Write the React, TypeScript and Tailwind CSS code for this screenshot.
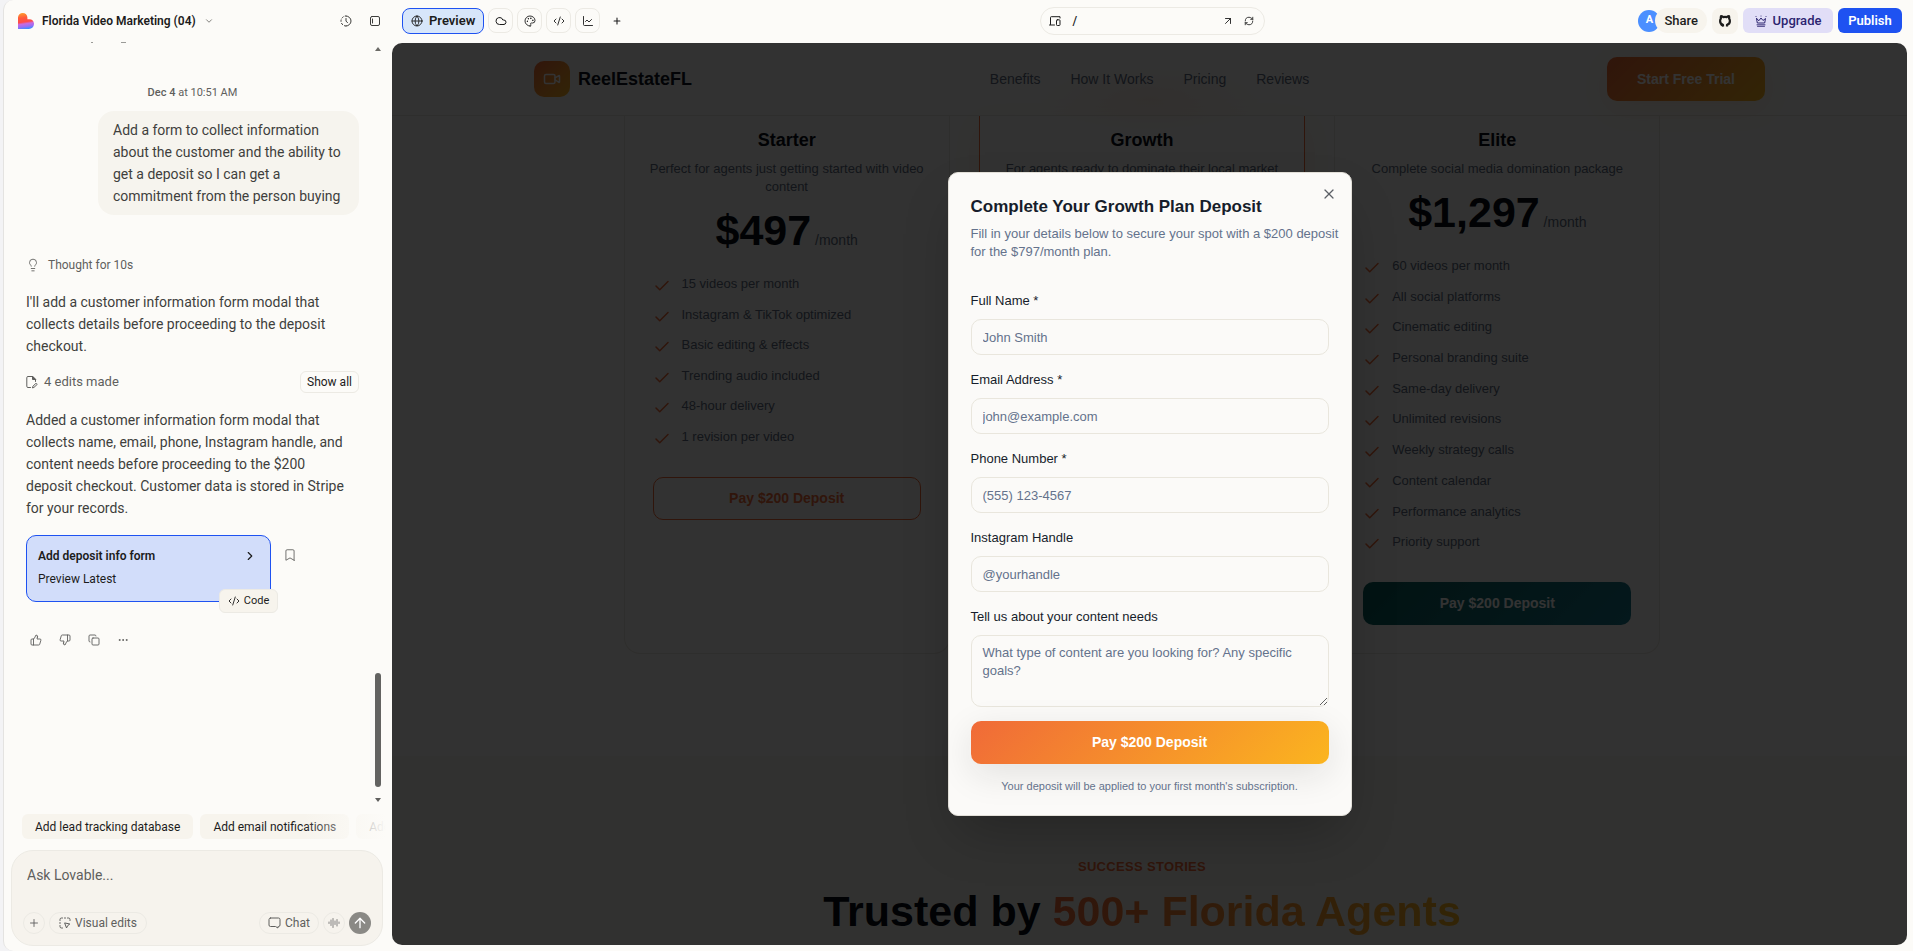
import type { ReactNode } from "react";
import {
  ArrowUp,
  ArrowUpRight,
  AudioLines,
  Bookmark,
  ChartLine,
  Check,
  ChevronDown,
  ChevronRight,
  Cloud,
  CodeXml,
  Copy,
  Ellipsis,
  Globe,
  Lightbulb,
  Palette,
  Plus,
  RefreshCw,
  ThumbsDown,
  ThumbsUp,
  Video,
  X,
} from "lucide-react";

const stroke = { fill: "none", stroke: "currentColor", strokeLinecap: "round", strokeLinejoin: "round" } as const;

function BrandMark() {
  return (
    <svg viewBox="0 0 16 16" className="size-4 shrink-0" aria-hidden="true">
      <defs>
        <linearGradient id="brand" x1="0.3" y1="0" x2="0.45" y2="1">
          <stop offset="0" stopColor="#ff9a2e" />
          <stop offset="0.3" stopColor="#ff5a3c" />
          <stop offset="0.56" stopColor="#ff4a4a" />
          <stop offset="0.68" stopColor="#c86be0" />
          <stop offset="0.85" stopColor="#9a6cf5" />
          <stop offset="1" stopColor="#3f8cff" />
        </linearGradient>
      </defs>
      <path
        d="M0 4.6A4.7 4.7 0 0 1 4.7 0C7.400 0 9.400 2 9.400 4.600V6.200H11.500A4.500 4.500 0 0 1 16 10.800C16 13.800 13.800 16 11 16H0Z"
        fill="url(#brand)"
      />
    </svg>
  );
}

function GithubIcon() {
  return (
    <svg viewBox="0 0 14 14" className="size-3.5" {...stroke} strokeWidth="2.200" strokeLinecap="butt" aria-hidden="true">
      <path d="M5 12.600V10.800C3.400 10.300 2.100 9.100 2.100 6.900C2.100 5.900 2.400 5.100 2.900 4.500C2.700 3.700 2.700 2.900 3 2.200C3.800 2.200 4.600 2.600 5.300 3.100C6.400 2.800 7.600 2.800 8.700 3.100C9.400 2.600 10.200 2.200 11 2.200C11.300 2.900 11.300 3.700 11.100 4.500C11.600 5.100 11.900 5.900 11.900 6.900C11.900 9.100 10.600 10.300 9 10.800V12.600" />
      <path d="M5 11.800C3.700 12 3.200 11.400 2.500 10.500" strokeWidth="1.200" />
    </svg>
  );
}

function HistoryIcon() {
  return (
    <svg viewBox="0 0 12 12" className="size-3" {...stroke} strokeWidth="1" aria-hidden="true">
      <path d="M6 1A5 5 0 0 1 6 11" />
      <path d="M6 11A5 5 0 0 1 6 1" strokeDasharray="1.6 2" />
      <path d="M6 3.500V6.200L7.500 7.500" />
    </svg>
  );
}

function PanelIcon() {
  return (
    <svg viewBox="0 0 12 12" className="size-3" {...stroke} strokeWidth="1" aria-hidden="true">
      <rect x="1.500" y="1.500" width="9" height="9" rx="1.500" />
      <path d="M3.500 4V8" />
    </svg>
  );
}

function FileEditIcon() {
  return (
    <svg viewBox="0 0 12 14" className="h-3.5 w-3" {...stroke} strokeWidth="1" aria-hidden="true">
      <path d="M4.500 12.500H2A1.200 1.200 0 0 1 .8 11.300V2.700A1.200 1.200 0 0 1 2 1.500H6.500L9.500 4.500V6.500" />
      <path d="M6.500 1.500V4.500H9.500Z" fill="currentColor" />
      <path d="M6.500 12.500L7 11.200L10 8.200L11.200 9.400L8.200 12.200Z" />
    </svg>
  );
}

function VisualEditIcon() {
  return (
    <svg viewBox="0 0 12 12" className="size-3" {...stroke} strokeWidth="1" aria-hidden="true">
      <path d="M1 3.500V2.500A1.500 1.500 0 0 1 2.500 1H3.500M8.500 1H9.500A1.500 1.500 0 0 1 11 2.500V3.500M1 8.500V9.500A1.500 1.500 0 0 0 2.500 11H3.500M5.500 1H6.500M1 5.500V6.500" />
      <path d="M6 6L10.800 7L8.800 8.500L7.700 10.600Z" />
    </svg>
  );
}

function ChatIcon() {
  return (
    <svg viewBox="0 0 13 12" className="h-3 w-[13px]" {...stroke} strokeWidth="1" aria-hidden="true">
      <path d="M2.500 1H10.500A1.500 1.500 0 0 1 12 2.500V8A1.500 1.500 0 0 1 10.500 9.500H10V11L7.500 9.500H2.500A1.500 1.500 0 0 1 1 8V2.500A1.500 1.500 0 0 1 2.500 1Z" />
    </svg>
  );
}

function DevicesIcon() {
  return (
    <svg viewBox="0 0 12 10" className="h-2.5 w-3" {...stroke} strokeWidth="1" aria-hidden="true">
      <path d="M1.500 8.500V1.500A.8 .8 0 0 1 2.300 .7H11V2M.5 9H5.500" />
      <rect x="7.500" y="3.800" width="3.500" height="5.700" rx=".8" />
    </svg>
  );
}

function CrownIcon() {
  return (
    <svg viewBox="0 0 12 12" className="size-3" {...stroke} strokeWidth="1" aria-hidden="true">
      <path d="M1.500 3.500L2.300 8H9.700L10.500 3.500L8 5.500L6 3L4 5.500Z" />
      <path d="M1 1.500V1.600M6 1V1.100M11 1.500V1.600M2 9.800H10M2.500 11.300H9.500" strokeWidth=".9" />
    </svg>
  );
}

function ToolButton({ label, children }: { label: string; children: ReactNode }) {
  return (
    <button aria-label={label} className="flex size-[25px] items-center justify-center rounded-lg border border-[#eceae4]">
      {children}
    </button>
  );
}

function Sidebar() {
  return (
    <aside className="flex w-[388px] shrink-0 flex-col">
      <header className="flex h-[41px] items-center pl-[14px] pr-[11px]">
        <BrandMark />
        <button className="ml-2 flex items-center gap-2 text-[12px] font-semibold text-[#1c1c1c]">
          Florida Video Marketing (04)
          <ChevronDown className="size-2.5 text-[#6b6a66]" />
        </button>
        <div className="ml-auto flex items-center gap-[17px] text-[#3d3d3b]">
          <button aria-label="History"><HistoryIcon /></button>
          <button aria-label="Collapse panel"><PanelIcon /></button>
        </div>
      </header>

      <div className="flex min-h-0 flex-1">
        <div className="flex min-w-0 flex-1 flex-col overflow-hidden pl-[22px] pr-[15px] text-[14px] leading-[22px] text-[#3f3f3d]">
          <div className="ml-[65px] flex h-0.5 items-end gap-7" aria-hidden="true">
            <span className="h-px w-0.5 bg-[#9a9a97]" />
            <span className="h-px w-[5px] bg-[#9a9a97]" />
          </div>
          <p className="mt-[42px] text-center text-[11px] leading-4 text-[#5f5f5d]">
            <span className="font-medium">Dec 4</span> at 10:51 AM
          </p>
          <p className="mt-[10px] w-[261px] self-end rounded-2xl bg-[#f6f4ee] px-[15px] py-2">
            Add a form to collect information about the customer and the ability to get a deposit so I can get a
            commitment from the person buying
          </p>
          <div className="mt-[39px] flex items-center gap-2 text-[12px] text-[#5f5f5d]">
            <Lightbulb className="size-3.5" strokeWidth={1.5} />
            Thought for 10s
          </div>
          <p className="mt-[15px]">
            I'll add a customer information form modal that collects details before proceeding to the deposit checkout.
          </p>
          <div className="mt-[14px] flex items-center gap-1.5 text-[13px] text-[#5f5f5d]">
            <FileEditIcon />
            4 edits made
            <button className="ml-auto h-[22px] w-[59px] rounded-md border border-[#eceae4] text-[12px] leading-none text-[#1c1c1c]">
              Show all
            </button>
          </div>
          <p className="mt-4 pr-3">
            Added a customer information form modal that collects name, email, phone, Instagram handle, and content
            needs before proceeding to the $200 deposit checkout. Customer data is stored in Stripe for your records.
          </p>
          <div className="mt-4 flex items-start gap-3">
            <div className="relative h-[67px] w-[245px] rounded-[10px] border border-[#1e52f1] bg-[#d2ddfa] px-[11px] pt-[9px] text-[12px] text-[#1c1c1c]">
              <div className="flex items-center justify-between font-semibold">
                Add deposit info form
                <ChevronRight className="mr-0.5 size-3.5" />
              </div>
              <div className="mt-px">Preview Latest</div>
              <button className="absolute -bottom-3 -right-2 flex h-6 w-[59px] items-center justify-center gap-1 rounded-md border border-[#eceae4] bg-[#f7f4ed] text-[11px]">
                <CodeXml className="size-3" strokeWidth={1.8} />
                Code
              </button>
            </div>
            <button aria-label="Bookmark" className="mt-[13px] text-[#5f5f5d]">
              <Bookmark className="size-3.5" strokeWidth={1.5} />
            </button>
          </div>
          <div className="ml-[4px] mt-8 flex items-center gap-[17px] text-[#5f5f5d]">
            <button aria-label="Like"><ThumbsUp className="size-3" strokeWidth={1.8} /></button>
            <button aria-label="Dislike"><ThumbsDown className="size-3" strokeWidth={1.8} /></button>
            <button aria-label="Copy"><Copy className="size-3" strokeWidth={1.8} /></button>
            <button aria-label="More"><Ellipsis className="size-3" strokeWidth={2} /></button>
          </div>
        </div>
        <div className="mr-[10px] flex w-2 flex-col items-center justify-between pb-3 pt-1.5" aria-hidden="true">
          <span className="size-0 border-x-[3px] border-b-4 border-x-transparent border-b-[#6b6a66]" />
          <div className="mt-auto h-[114px] w-1.5 rounded-full bg-[#636361]" />
          <span className="mt-[11px] size-0 border-x-[3px] border-t-4 border-x-transparent border-t-[#5f5f5d]" />
        </div>
      </div>

      <div className="relative mr-[6px] flex h-[25px] gap-[7px] overflow-hidden pl-[18px] text-[12px] text-[#1c1c1c]">
        <button className="shrink-0 rounded-md bg-[#f7f4ed] px-[13px]">Add lead tracking database</button>
        <button className="shrink-0 rounded-md bg-[#f7f4ed] px-[13px]">Add email notifications</button>
        <button className="shrink-0 rounded-md bg-[#f7f4ed] px-[13px]">Add admin dashboard</button>
        <div className="absolute inset-y-0 right-0 w-[84px] bg-gradient-to-r from-transparent to-[#fcfbf8]" />
      </div>

      <form className="mb-[5px] ml-[7px] mr-[9px] mt-[11px] flex h-[96px] flex-col rounded-[22px] border border-[#eceae4] bg-[#f6f3ed] px-[11px] pb-[11px] text-[#5f5f5d]">
        <input
          aria-label="Ask Lovable"
          placeholder="Ask Lovable..."
          className="mt-3 h-6 w-full bg-transparent px-1 text-[14px] placeholder:text-[#5f5f5d] focus:outline-none"
        />
        <div className="mt-auto flex items-center gap-1 text-[12px]">
          <button type="button" aria-label="Attach" className="flex size-[22px] items-center justify-center rounded-full border border-[#eceae4]">
            <Plus className="size-3" strokeWidth={1.8} />
          </button>
          <button type="button" className="flex h-[22px] w-[98px] items-center justify-center gap-1 rounded-full border border-[#eceae4]">
            <VisualEditIcon />
            Visual edits
          </button>
          <button type="button" className="ml-auto flex h-[22px] w-[60px] items-center justify-center gap-1 rounded-full border border-[#eceae4]">
            <ChatIcon />
            Chat
          </button>
          <button type="button" aria-label="Voice" className="flex size-[22px] items-center justify-center rounded-full border border-[#eceae4]">
            <AudioLines className="size-3" strokeWidth={1.5} />
          </button>
          <button type="submit" aria-label="Send" className="flex size-[22px] items-center justify-center rounded-full bg-[#8a8985] text-white">
            <ArrowUp className="size-4" strokeWidth={2} />
          </button>
        </div>
      </form>
    </aside>
  );
}

function Toolbar() {
  return (
    <header className="grid h-[41px] grid-cols-[1fr_auto_1fr] items-center pl-[10px] pr-[5px] text-[#1c1c1c]">
      <div className="flex items-center gap-1">
        <button className="flex h-[26px] items-center gap-1.5 rounded-lg border border-[#1e52f1] bg-[#d7e6fa] px-2 text-[13px] font-semibold">
          <Globe className="size-3" strokeWidth={1.8} />
          Preview
        </button>
        <ToolButton label="Cloud"><Cloud className="size-3" strokeWidth={2} /></ToolButton>
        <ToolButton label="Design"><Palette className="size-3" strokeWidth={1.8} /></ToolButton>
        <ToolButton label="Code"><CodeXml className="size-3" strokeWidth={1.8} /></ToolButton>
        <ToolButton label="Analytics"><ChartLine className="size-3" strokeWidth={1.8} /></ToolButton>
        <button aria-label="Add tab" className="flex size-[25px] items-center justify-center">
          <Plus className="size-2.5" strokeWidth={2.6} />
        </button>
      </div>
      <div className="flex h-7 w-[225px] items-center rounded-full border border-[#eceae4] px-2 text-[12px]">
        <DevicesIcon />
        <span className="ml-3 font-medium">/</span>
        <button aria-label="Open in new tab" className="ml-auto"><ArrowUpRight className="size-3" strokeWidth={1.8} /></button>
        <button aria-label="Reload" className="ml-2.5 mr-[2px]"><RefreshCw className="size-2.5" strokeWidth={2} /></button>
      </div>
      <div className="flex items-center justify-end gap-[5px] text-[13px] font-medium">
        <div className="flex items-center">
          <span className="-mr-[5px] flex size-[22px] items-center justify-center rounded-full bg-[#4b8fff] text-[11px] font-bold text-white">A</span>
          <button className="relative h-[25px] rounded-full bg-[#f7f4ed] px-[9px]">Share</button>
        </div>
        <button aria-label="GitHub" className="flex size-[26px] items-center justify-center rounded-lg bg-[#f7f4ed]">
          <GithubIcon />
        </button>
        <button className="flex h-[25px] w-[90px] items-center justify-center gap-1.5 rounded-md bg-[#e1def7] text-[#2c2470]">
          <CrownIcon />
          Upgrade
        </button>
        <button className="h-[25px] w-[64px] rounded-md bg-[#1e52f1] font-semibold text-white">Publish</button>
      </div>
    </header>
  );
}

type Plan = { name: string; blurb: string; price: string; features: string[]; list: string };

const starter: Plan = {
  name: "Starter",
  blurb: "Perfect for agents just getting started with video content",
  price: "$497",
  list: "h-[175px]",
  features: [
    "15 videos per month",
    "Instagram & TikTok optimized",
    "Basic editing & effects",
    "Trending audio included",
    "48-hour delivery",
    "1 revision per video",
  ],
};

const growth: Plan = {
  name: "Growth",
  blurb: "For agents ready to dominate their local market",
  price: "$797",
  list: "h-[235px]",
  features: [],
};

const elite: Plan = {
  name: "Elite",
  blurb: "Complete social media domination package",
  price: "$1,297",
  list: "h-[300px]",
  features: [
    "60 videos per month",
    "All social platforms",
    "Cinematic editing",
    "Personal branding suite",
    "Same-day delivery",
    "Unlimited revisions",
    "Weekly strategy calls",
    "Content calendar",
    "Performance analytics",
    "Priority support",
  ],
};

function PlanCard({ plan, frame, cta }: { plan: Plan; frame: string; cta: string }) {
  return (
    <section className={`flex flex-1 flex-col rounded-b-2xl border border-t-0 px-7 pb-7 pt-3 ${frame}`}>
      <h3 className="text-center text-[18px] font-bold leading-6 text-[#050a14]">{plan.name}</h3>
      <p className="-mx-1 mt-[8px] text-center text-[13px] leading-[18px] text-[#5e6a80]">{plan.blurb}</p>
      <p className="mt-3 text-center leading-[44px]">
        <span className="text-[43px] font-bold text-[#050a14]">{plan.price}</span>
        <span className="text-[14px] text-[#5e6a80]"> /month</span>
      </p>
      <ul className={`mt-[11px] flex flex-col justify-between ${plan.list}`}>
        {plan.features.map((f) => (
          <li key={f} className="flex items-start gap-[11px] text-[13px] leading-[22px] text-[#5e6a80]">
            <Check className="mt-1 size-[18px] text-[#f06a38]" strokeWidth={2} />
            {f}
          </li>
        ))}
      </ul>
      <button className={`mt-[29px] h-[43px] rounded-[10px] text-[14px] font-bold ${cta}`}>Pay $200 Deposit</button>
    </section>
  );
}

function Site() {
  return (
    <div className="flex flex-1 flex-col bg-[#fbfaf8]">
      <nav className="relative h-[73px] border-b border-[#e6e4de]">
        <div className="absolute left-1/2 top-6 h-16 w-56 -translate-x-1/2 bg-[radial-gradient(closest-side,#ef6a3818,transparent)]" />
        <div className="relative mx-auto flex h-[72px] max-w-[1231px] items-center justify-between">
          <a href="#top" className="flex w-[158px] items-center gap-2 text-[18px] font-bold text-[#0b1220]">
            <span className="flex size-9 items-center justify-center rounded-[10px] bg-gradient-to-br from-[#f06a38] to-[#fbb51f] text-white">
              <Video className="size-[18px]" strokeWidth={2} />
            </span>
            ReelEstateFL
          </a>
          <div className="flex gap-[30px] text-[14px] text-[#5e6a80]">
            <a href="#benefits">Benefits</a>
            <a href="#how">How It Works</a>
            <a href="#pricing">Pricing</a>
            <a href="#reviews">Reviews</a>
          </div>
          <button className="h-11 w-[158px] rounded-[10px] bg-[linear-gradient(135deg,#f06a38,#fbb51f)] text-[14px] font-bold text-white shadow-[0_8px_30px_#f5902e20]">
            Start Free Trial
          </button>
        </div>
      </nav>
      <div className="mr-[15px] flex flex-1 flex-col">
        <div className="mx-auto flex h-[538px] w-full max-w-[1037px] gap-[29px]">
          <PlanCard plan={starter} frame="border-[#e6e4de]" cta="border border-[#f06a38] text-[#f06a38]" />
          <PlanCard
            plan={growth}
            frame="border-[#f06a38] shadow-[0_10px_30px_#f5902e20]"
            cta="bg-[linear-gradient(135deg,#f06a38,#fbb51f)] text-white"
          />
          <PlanCard plan={elite} frame="border-[#e6e4de]" cta="bg-[linear-gradient(135deg,#0b5f5c,#17788c)] text-white" />
        </div>
      </div>
      <section className="h-[189px] bg-[#f6f5ef] pr-[15px] pt-[102px] text-center">
        <p className="text-[13px] font-bold uppercase leading-[18px] tracking-wide text-[#f06a38]">Success Stories</p>
        <h2 className="mt-[9px] text-[43px] font-bold leading-[52px] text-[#050a14]">
          Trusted by{" "}
          <span className="bg-gradient-to-r from-[#f06a38] to-[#fbb51f] bg-clip-text text-transparent">
            500+ Florida Agents
          </span>
        </h2>
      </section>
    </div>
  );
}

const fields = [
  { id: "name", label: "Full Name *", type: "text", placeholder: "John Smith" },
  { id: "email", label: "Email Address *", type: "email", placeholder: "john@example.com" },
  { id: "phone", label: "Phone Number *", type: "tel", placeholder: "(555) 123-4567" },
  { id: "instagram", label: "Instagram Handle", type: "text", placeholder: "@yourhandle" },
];

function DepositDialog() {
  return (
    <div
      role="dialog"
      aria-labelledby="dialog-title"
      className="relative w-[404px] rounded-[10px] border border-[#e2dfd8] bg-[#fbfaf8] p-[22px] pb-[21px] text-[#161d2b] shadow-2xl"
    >
      <button aria-label="Close" className="absolute right-[14px] top-[13px] text-[#5c6066]">
        <X className="size-4" strokeWidth={1.8} />
      </button>
      <h1 id="dialog-title" className="text-[17px] font-bold leading-6">Complete Your Growth Plan Deposit</h1>
      <p className="-mr-3 mt-1.5 text-[13px] leading-[18px] text-[#64728c]">
        Fill in your details below to secure your spot with a $200 deposit for the $797/month plan.
      </p>
      <form className="mt-[31px] flex flex-col text-[13px]">
        {fields.map((f) => (
          <div key={f.id} className="mb-4 flex flex-col gap-[9px]">
            <label htmlFor={f.id} className="leading-[18px]">{f.label}</label>
            <input
              id={f.id}
              type={f.type}
              placeholder={f.placeholder}
              className="h-9 rounded-[10px] border border-[#e9e6dd] bg-transparent px-[11px] placeholder:text-[#64728c] focus:outline-none"
            />
          </div>
        ))}
        <div className="flex flex-col gap-[9px]">
          <label htmlFor="needs" className="leading-[18px]">Tell us about your content needs</label>
          <textarea
            id="needs"
            placeholder="What type of content are you looking for? Any specific goals?"
            className="h-[72px] resize-y rounded-[10px] border border-[#e9e6dd] bg-transparent px-[11px] py-2 leading-[18px] placeholder:text-[#64728c] focus:outline-none"
          />
        </div>
        <button
          type="submit"
          className="mt-[14px] h-[43px] rounded-[10px] bg-[linear-gradient(135deg,#f06a38,#fbb51f)] text-[14px] font-bold text-white shadow-[0_10px_36px_#1c1c1c1c]"
        >
          Pay $200 Deposit
        </button>
        <p className="mt-[14px] text-center text-[11px] leading-4 text-[#64728c]">
          Your deposit will be applied to your first month's subscription.
        </p>
      </form>
    </div>
  );
}

export default function App() {
  return (
    <div className="h-screen bg-[#f3f3f5] pl-[3px] font-[Roboto,sans-serif]">
      <div className="flex h-full overflow-hidden rounded-l-[10px] border-l border-[#e4e3e1] bg-[#fcfbf8]">
        <Sidebar />
        <div className="flex min-w-0 flex-1 flex-col pb-[6px] pr-[6px]">
          <Toolbar />
          <main className="relative mt-0.5 flex min-h-0 flex-1 flex-col overflow-hidden rounded-[10px] font-['Liberation_Sans',Arial,sans-serif]">
            <Site />
            <div className="absolute inset-0 flex items-center justify-center bg-black/80">
              <DepositDialog />
            </div>
          </main>
        </div>
      </div>
    </div>
  );
}
